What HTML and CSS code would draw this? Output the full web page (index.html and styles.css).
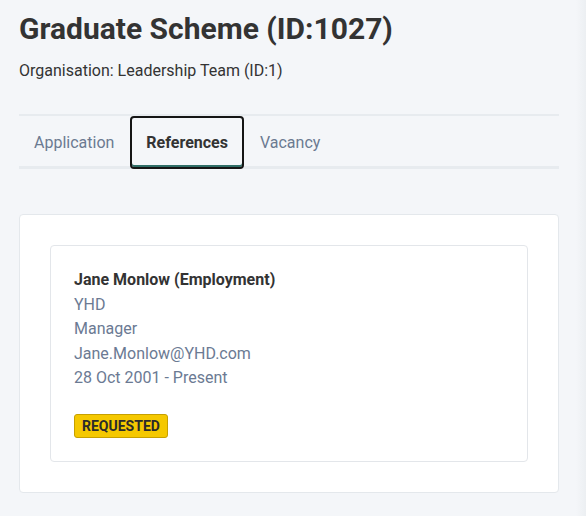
FILE: index.html
```html
<!DOCTYPE html>
<html lang="en">
<head>
    <meta charset="UTF-8">
    <meta name="viewport" content="width=device-width, initial-scale=1.0">
    <title>Graduate Scheme</title>
    <link rel="stylesheet" href="styles.css">
</head>
<body>
    <div class="page">
        <h1>Graduate Scheme (ID:1027)</h1>
        <p class="org">Organisation: Leadership Team (ID:1)</p>

        <nav class="tabs">
            <a class="tab" href="#">Application</a>
            <a class="tab active" href="#">References</a>
            <a class="tab" href="#">Vacancy</a>
        </nav>

        <div class="panel">
            <div class="reference">
                <div class="ref-name">Jane Monlow (Employment)</div>
                <div class="ref-line">YHD</div>
                <div class="ref-line">Manager</div>
                <div class="ref-line">Jane.Monlow@YHD.com</div>
                <div class="ref-line">28 Oct 2001 - Present</div>
                <span class="badge">Requested</span>
            </div>
        </div>
    </div>
</body>
</html>
```

FILE: styles.css
```css
html, body {
    height: 100%;
}
body {
    margin: 0;
    font-family: Roboto, "Liberation Sans", Arial, sans-serif;
    color: #333;
    background: linear-gradient(to right, #f4f6f9 calc(100% - 10px), #eceff2);
}
.page {
    padding: 11px 27px 0 19px;
}
h1 {
    margin: 0;
    font-size: 30px;
    line-height: 36px;
    font-weight: 700;
    color: #333;
}
.org {
    margin: 14px 0 0;
    font-size: 16px;
    line-height: 20px;
}
.tabs {
    display: flex;
    margin-top: 33px;
    border-top: 2px solid #e7ebef;
    border-bottom: 3px solid #e7ebef;
}
.tab {
    display: flex;
    align-items: center;
    height: 49px;
    padding: 0 14px;
    margin-bottom: -3px;
    border: 2px solid transparent;
    border-radius: 4px;
    font-size: 16px;
    color: #6b7a91;
    text-decoration: none;
}
.tab:first-child {
    margin-left: -1px;
}
.tab.active {
    border-color: #151515;
    color: #333;
    font-weight: 700;
    box-shadow: inset 0 -2px 0 #2f6e67;
}
.panel {
    margin-top: 45px;
    padding: 30px;
    background: #fff;
    border: 1px solid #e4e8ec;
    border-radius: 4px;
}
.reference {
    padding: 22px 23px 23px;
    border: 1px solid #e3e6ea;
    border-radius: 4px;
}
.ref-name {
    font-size: 16px;
    line-height: 24.5px;
    font-weight: 700;
}
.ref-line {
    font-size: 16px;
    line-height: 24.5px;
    color: #6b7a93;
}
.badge {
    display: inline-block;
    margin-top: 23px;
    padding: 0 7px;
    height: 22px;
    line-height: 22px;
    background: #f5c800;
    border: 1px solid #c6a000;
    border-radius: 3px;
    font-size: 14px;
    font-weight: 700;
    text-transform: uppercase;
    color: #2b2b2b;
}
```
